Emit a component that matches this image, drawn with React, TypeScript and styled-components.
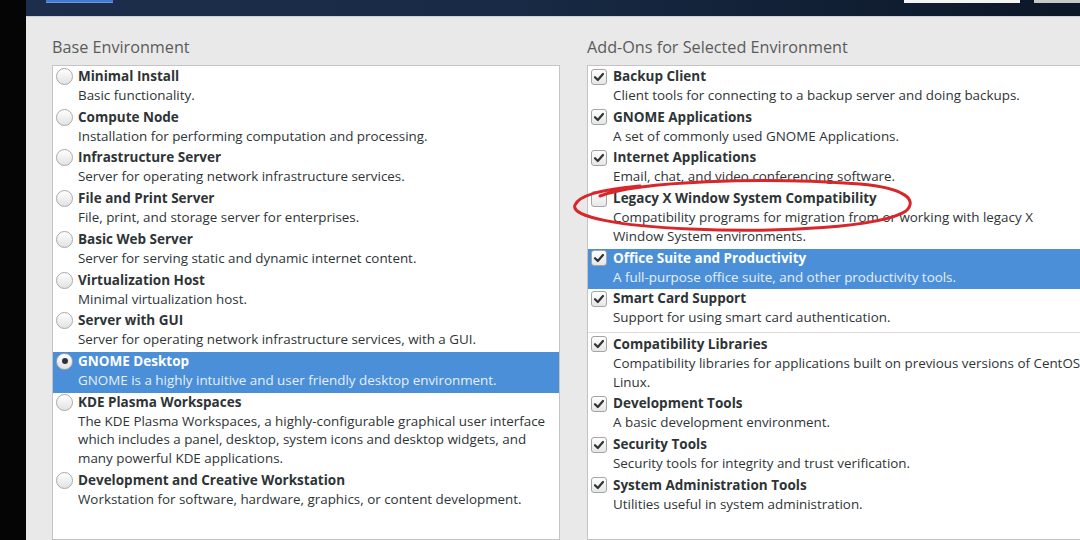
import React from "react";
import styled, { createGlobalStyle } from "styled-components";

const GlobalStyle = createGlobalStyle`
  html, body {
    margin: 0;
    padding: 0;
    background: #000;
  }
  * {
    box-sizing: border-box;
  }
`;

// Page frame
const Screen = styled.div`
  position: relative;
  width: 1080px;
  height: 540px;
  overflow: hidden;
  display: flex;
  background: #000;
  font-family: "Open Sans", "DejaVu Sans", sans-serif;
`;

const BlackEdge = styled.div`
  width: 26px;
  flex-shrink: 0;
  background: #050505;
`;

const Main = styled.div`
  flex: 1;
  display: flex;
  flex-direction: column;
  min-width: 0;
`;

const Header = styled.div`
  height: 16px;
  flex-shrink: 0;
  display: flex;
  align-items: flex-start;
  padding-left: 20px;
  background: linear-gradient(90deg, #1c2e4b 0%, #182a45 45%, #0c1727 100%);
`;

const HeaderButton = styled.div`
  width: 67px;
  height: 3px;
  background: #3d7ad0;
  border-bottom: 1px solid #6c9ad8;
`;

const HeaderSpacer = styled.div`
  flex: 1;
`;

const HeaderField = styled.div`
  width: 116px;
  height: 3px;
  background: #f4f4f4;
`;

const HeaderMenu = styled.div`
  width: 46px;
  height: 3px;
  margin-left: 14px;
  background: #c8c8c8;
`;

const Content = styled.div`
  flex: 1;
  display: grid;
  grid-template-columns: 508px 508px;
  column-gap: 27px;
  padding: 20px 0 0 26px;
  background: #e9e9e9;
  border-top: 1px solid #d0d0d0;
`;

const Column = styled.div`
  display: flex;
  flex-direction: column;
  min-width: 0;
`;

const Heading = styled.div`
  font-size: 16.2px;
  line-height: 21px;
  color: #5b5b5b;
  margin-bottom: 7px;
`;

const ListBox = styled.div`
  flex: 1;
  background: #fff;
  border: 1px solid #c4c4c4;
  padding-top: 1px;
`;

const Row = styled.div<{ $selected?: boolean }>`
  display: flex;
  align-items: flex-start;
  padding: 0 0 3px 2px;
  background: ${(p) => (p.$selected ? "#4a8fd8" : "transparent")};
  color: ${(p) => (p.$selected ? "#ffffff" : "#2e3436")};
`;

const Separator = styled.div`
  height: 1px;
  margin: 2px 0 2px;
  background: #dcdcdc;
`;

const ControlSlot = styled.div`
  width: 23px;
  height: 19px;
  flex-shrink: 0;
  display: flex;
  align-items: center;
  padding-left: 1px;
`;

const Radio = styled.div<{ $on?: boolean }>`
  width: 17px;
  height: 17px;
  border-radius: 50%;
  border: 1px solid #a9a9a9;
  background: linear-gradient(#ffffff, #e2e2e2);
  display: flex;
  align-items: center;
  justify-content: center;
  &::after {
    content: "";
    display: ${(p) => (p.$on ? "block" : "none")};
    width: 6px;
    height: 6px;
    border-radius: 50%;
    background: #2e3436;
  }
`;

const CheckBox = styled.div`
  width: 16px;
  height: 16px;
  border-radius: 3px;
  border: 1px solid #a4a4a4;
  background: linear-gradient(#ffffff, #e6e6e6);
  display: flex;
  align-items: center;
  justify-content: center;
`;

const Texts = styled.div`
  display: flex;
  flex-direction: column;
  min-width: 0;
`;

const Title = styled.div`
  font-size: 13.5px;
  font-weight: 700;
  line-height: 19px;
  white-space: nowrap;
`;

const Desc = styled.div<{ $selected?: boolean }>`
  font-size: 13.4px;
  line-height: 18.7px;
  white-space: nowrap;
  color: ${(p) => (p.$selected ? "#e6effa" : "#2e3436")};
`;

const Annotation = styled.svg`
  position: absolute;
  left: 0;
  top: 0;
  pointer-events: none;
`;

type Item = {
  title: string;
  lines: string[];
  checked?: boolean;
  selected?: boolean;
};

const baseEnvs: Item[] = [
  { title: "Minimal Install", lines: ["Basic functionality."] },
  { title: "Compute Node", lines: ["Installation for performing computation and processing."] },
  { title: "Infrastructure Server", lines: ["Server for operating network infrastructure services."] },
  { title: "File and Print Server", lines: ["File, print, and storage server for enterprises."] },
  { title: "Basic Web Server", lines: ["Server for serving static and dynamic internet content."] },
  { title: "Virtualization Host", lines: ["Minimal virtualization host."] },
  { title: "Server with GUI", lines: ["Server for operating network infrastructure services, with a GUI."] },
  {
    title: "GNOME Desktop",
    lines: ["GNOME is a highly intuitive and user friendly desktop environment."],
    checked: true,
    selected: true,
  },
  {
    title: "KDE Plasma Workspaces",
    lines: [
      "The KDE Plasma Workspaces, a highly-configurable graphical user interface",
      "which includes a panel, desktop, system icons and desktop widgets, and",
      "many powerful KDE applications.",
    ],
  },
  {
    title: "Development and Creative Workstation",
    lines: ["Workstation for software, hardware, graphics, or content development."],
  },
];

const envAddons: Item[] = [
  { title: "Backup Client", lines: ["Client tools for connecting to a backup server and doing backups."], checked: true },
  { title: "GNOME Applications", lines: ["A set of commonly used GNOME Applications."], checked: true },
  { title: "Internet Applications", lines: ["Email, chat, and video conferencing software."], checked: true },
  {
    title: "Legacy X Window System Compatibility",
    lines: [
      "Compatibility programs for migration from or working with legacy X",
      "Window System environments.",
    ],
  },
  {
    title: "Office Suite and Productivity",
    lines: ["A full-purpose office suite, and other productivity tools."],
    checked: true,
    selected: true,
  },
  { title: "Smart Card Support", lines: ["Support for using smart card authentication."], checked: true },
];

const commonAddons: Item[] = [
  {
    title: "Compatibility Libraries",
    lines: [
      "Compatibility libraries for applications built on previous versions of CentOS",
      "Linux.",
    ],
    checked: true,
  },
  { title: "Development Tools", lines: ["A basic development environment."], checked: true },
  { title: "Security Tools", lines: ["Security tools for integrity and trust verification."], checked: true },
  { title: "System Administration Tools", lines: ["Utilities useful in system administration."], checked: true },
];

const CheckMark = () => (
  <svg width="12" height="12" viewBox="0 0 12 12">
    <path d="M2 6.2 L4.8 9 L10 3" fill="none" stroke="#2e3436" strokeWidth="2.2" strokeLinecap="round" strokeLinejoin="round" />
  </svg>
);

const Choice: React.FC<{ item: Item; kind: "radio" | "check" }> = ({ item, kind }) => (
  <Row $selected={item.selected}>
    <ControlSlot>
      {kind === "radio" ? (
        <Radio $on={item.checked} />
      ) : (
        <CheckBox>{item.checked && <CheckMark />}</CheckBox>
      )}
    </ControlSlot>
    <Texts>
      <Title>{item.title}</Title>
      {item.lines.map((line) => (
        <Desc key={line} $selected={item.selected}>
          {line}
        </Desc>
      ))}
    </Texts>
  </Row>
);

const App: React.FC = () => {
  return (
    <>
      <GlobalStyle />
      <Screen>
        <BlackEdge />
        <Main>
          <Header>
            <HeaderButton />
            <HeaderSpacer />
            <HeaderField />
            <HeaderMenu />
          </Header>
          <Content>
            <Column>
              <Heading>Base Environment</Heading>
              <ListBox>
                {baseEnvs.map((item) => (
                  <Choice key={item.title} item={item} kind="radio" />
                ))}
              </ListBox>
            </Column>
            <Column>
              <Heading>Add-Ons for Selected Environment</Heading>
              <ListBox>
                {envAddons.map((item) => (
                  <Choice key={item.title} item={item} kind="check" />
                ))}
                <Separator />
                {commonAddons.map((item) => (
                  <Choice key={item.title} item={item} kind="check" />
                ))}
              </ListBox>
            </Column>
          </Content>
        </Main>

        {/* hand-drawn red circle around the Legacy X option */}
        <Annotation width="1080" height="540" viewBox="0 0 1080 540">
          <path
            d="M600 196 C 640 181, 760 177, 860 184 C 905 188, 918 200, 906 211 C 882 227, 780 233, 690 229 C 620 226, 570 217, 575 205 C 579 195, 605 189, 640 186"
            fill="none"
            stroke="#d8262b"
            strokeWidth="3"
            strokeLinecap="round"
          />
        </Annotation>
      </Screen>
    </>
  );
};

export default App;
